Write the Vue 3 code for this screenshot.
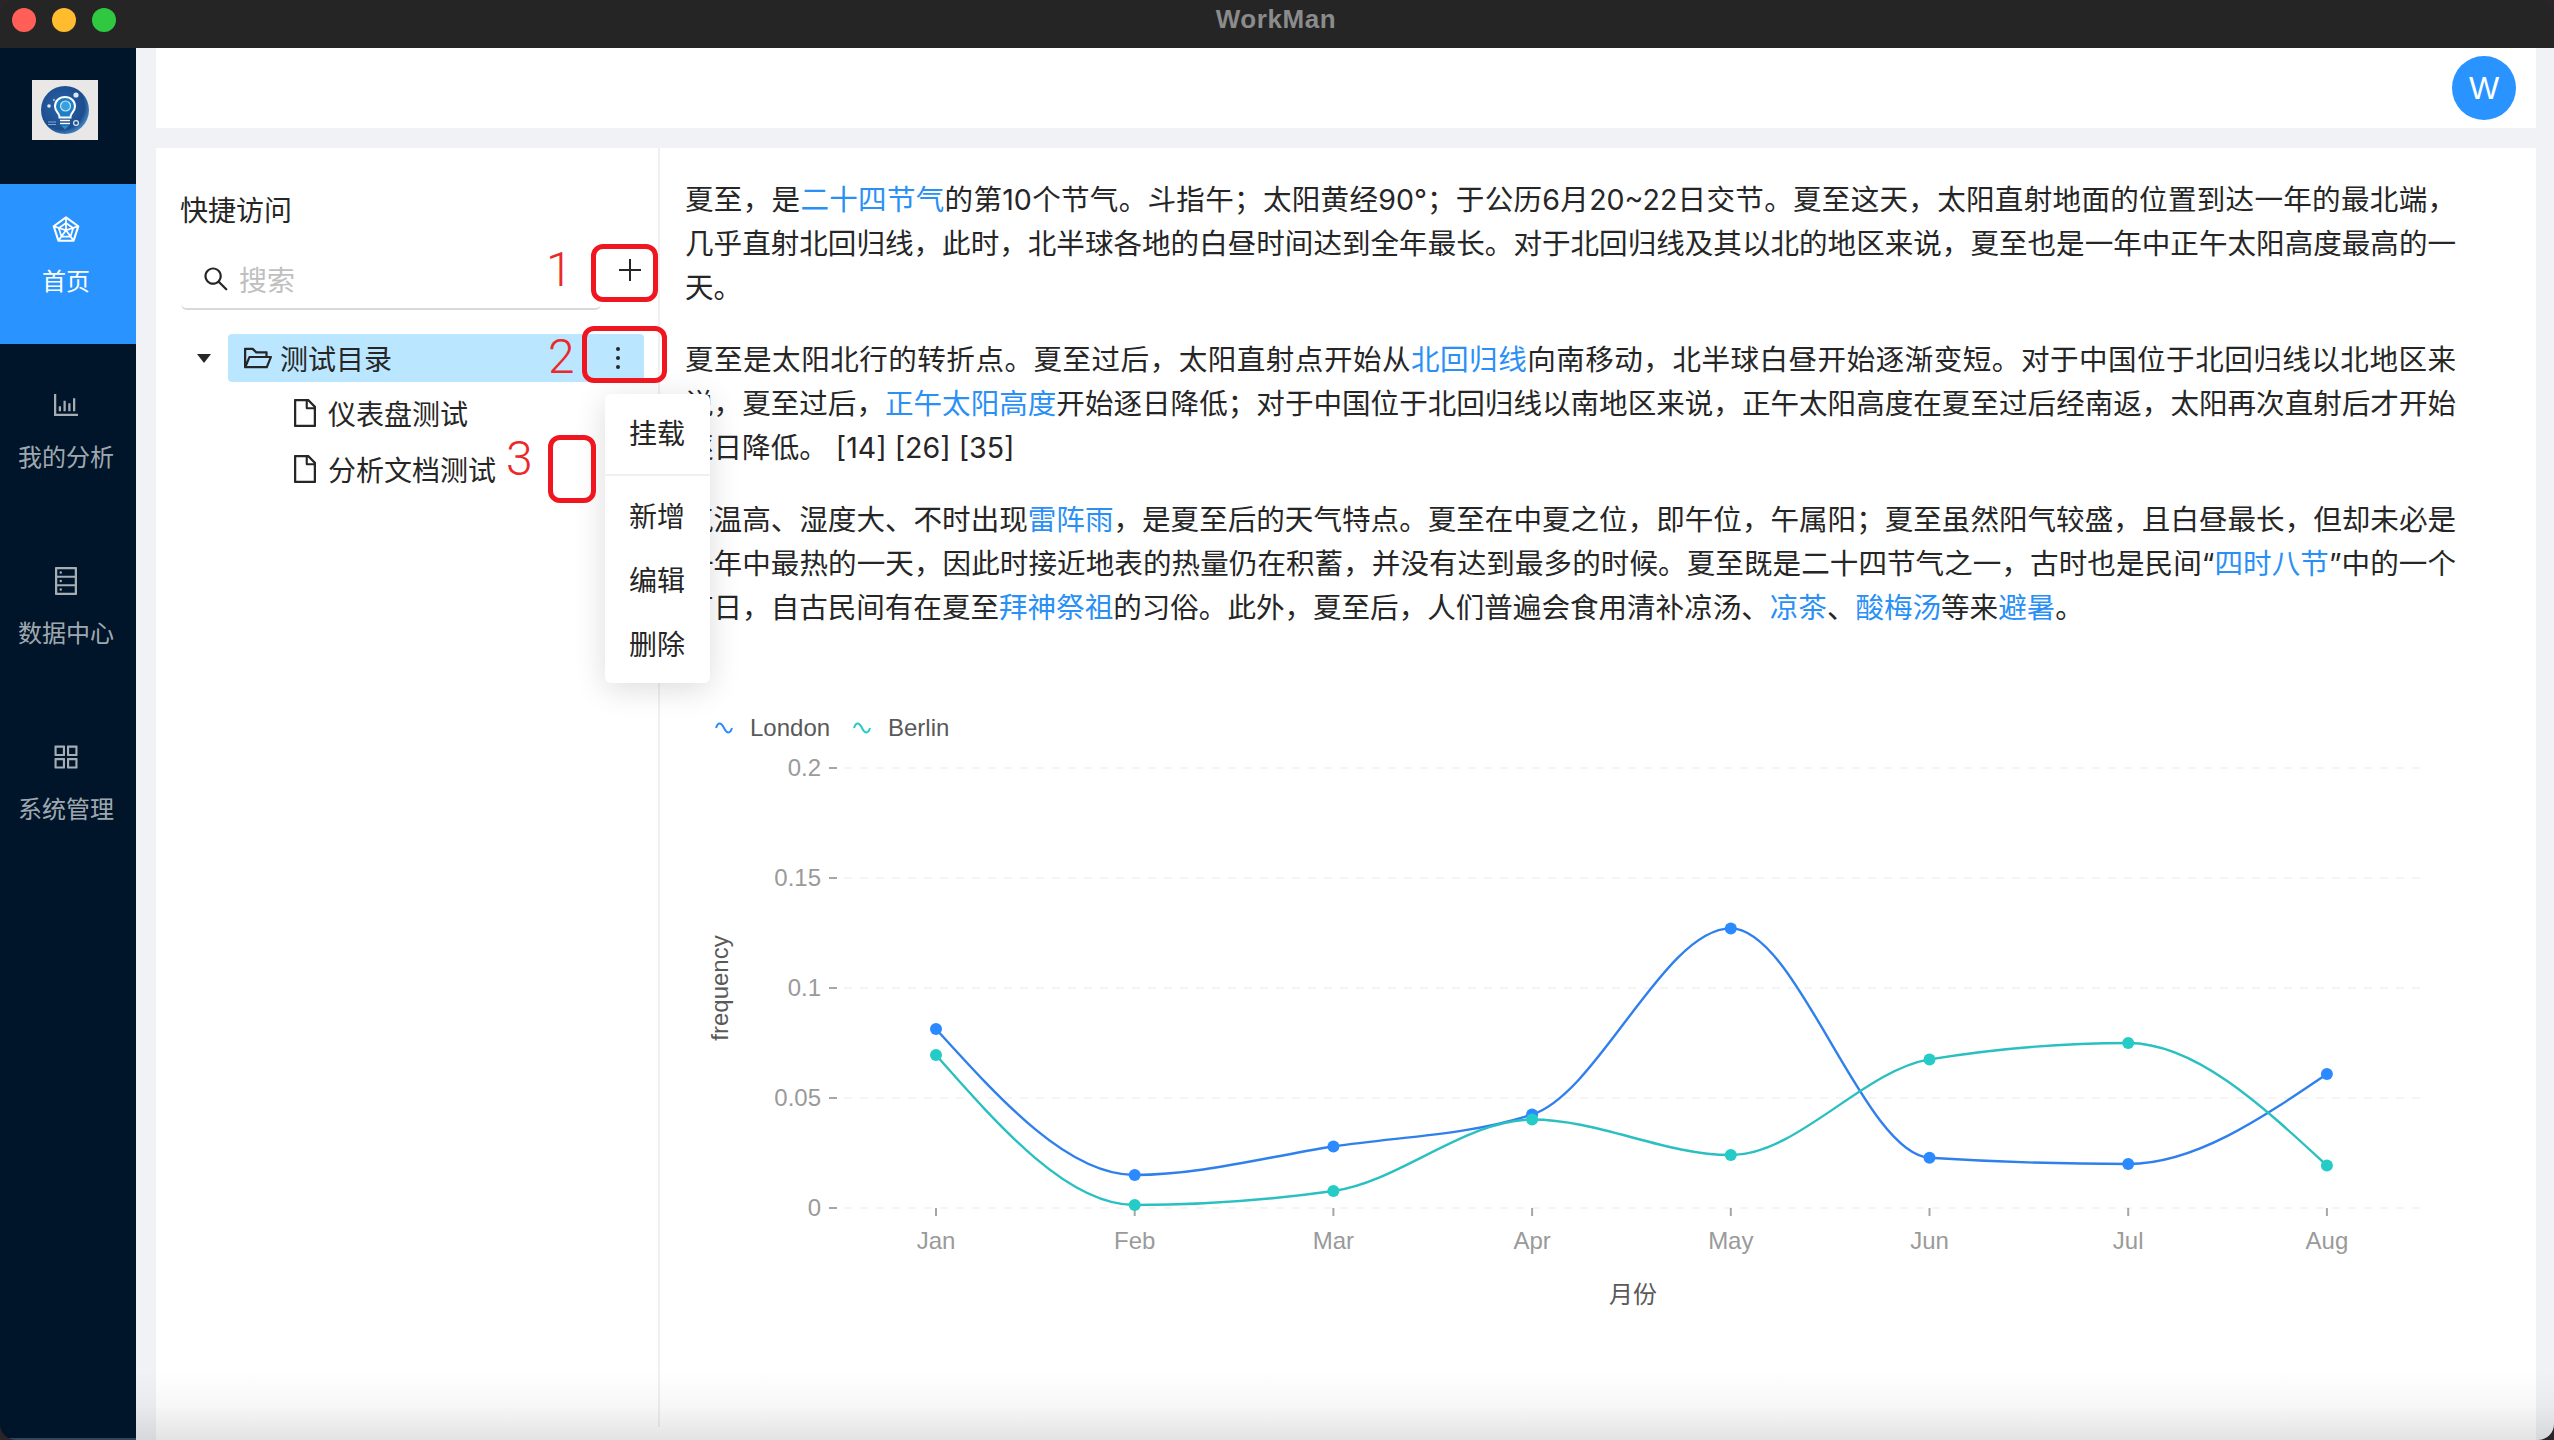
<template>
  <div class="window">
    <div class="titlebar">
      <div class="lights">
        <span class="light red"></span>
        <span class="light yellow"></span>
        <span class="light green"></span>
      </div>
      <span class="app-title">WorkMan</span>
    </div>

    <div class="body">
      <aside class="sidebar">
        <div class="logo-wrap">
          <svg class="logo" viewBox="0 0 66 60">
            <defs>
              <radialGradient id="logoBg" cx="42%" cy="42%" r="62%">
                <stop offset="0%" stop-color="#2a63a6" />
                <stop offset="78%" stop-color="#1c4d8e" />
                <stop offset="100%" stop-color="#4a8cc6" />
              </radialGradient>
            </defs>
            <rect width="66" height="60" fill="#e9e8e6" />
            <circle cx="33" cy="30" r="24" fill="url(#logoBg)" />
            <path d="M33 17c-6 0-10 4-10 9.500 0 3.500 2 5.500 3.500 7.500 1 1.500 1 2.500 1 3.500h11c0-1 0-2 1-3.500 1.500-2 3.500-4 3.500-7.500 0-5.500-4-9.500-10-9.500z" fill="#1f7fc4" stroke="#fff" stroke-width="2" />
            <circle cx="33.500" cy="26" r="5" fill="#3aa0dc" stroke="#bfe6fb" stroke-width="1.200" />
            <path d="M28 40.500h10M28 43.500h10" stroke="#fff" stroke-width="1.600" />
            <path d="M29 45.500h8l-4 4z" fill="#2a8fd6" />
            <circle cx="44" cy="15" r="2.600" fill="#dfe8f2" />
            <circle cx="17" cy="26" r="1.800" fill="#dfe8f2" />
            <circle cx="22" cy="20" r="1.200" fill="#8fb4d8" />
            <circle cx="44" cy="43" r="2.400" fill="none" stroke="#dfe8f2" stroke-width="1.200" />
            <path d="M16 42h8M16 44.500h8" stroke="#7fa6cf" stroke-width="1" />
          </svg>
        </div>
        <nav class="nav">
          <div
            v-for="item in navItems"
            :key="item.label"
            class="nav-item"
            :class="{ active: item.active }"
          >
            <svg class="nav-icon" viewBox="64 64 896 896" fill="currentColor">
              <path :d="item.icon" />
            </svg>
            <span class="nav-label">{{ item.label }}</span>
          </div>
        </nav>
      </aside>

      <main class="main">
        <header class="topbar">
          <div class="avatar">W</div>
        </header>

        <section class="content">
          <div class="content-inner">
            <div class="panel">
              <div class="panel-title">快捷访问</div>
              <div class="search-row">
                <div class="search">
                  <svg class="search-icon" viewBox="64 64 896 896" fill="currentColor">
                    <path d="M909.6 854.5L649.9 594.8C690.2 542.7 712 479 712 412c0-80.2-31.3-155.4-87.9-212.1-56.6-56.7-132-87.9-212.1-87.9s-155.5 31.3-212.1 87.9C143.2 256.5 112 331.8 112 412c0 80.1 31.3 155.500 87.9 212.1C256.5 680.8 331.8 712 412 712c67 0 130.6-21.8 182.7-62l259.7 259.6a8.2 8.2 0 0011.6 0l43.6-43.5a8.2 8.2 0 000-11.6zM570.4 570.4C528 612.7 471.8 636 412 636s-116-23.3-158.4-65.6C211.3 528 188 471.8 188 412s23.3-116.1 65.6-158.4C296 211.3 352.2 188 412 188s116.1 23.2 158.4 65.6S636 352.2 636 412s-23.3 116.1-65.6 158.4z" />
                  </svg>
                  <span class="placeholder">搜索</span>
                </div>
                <div class="add-btn">
                  <svg viewBox="0 0 22 22" width="22" height="22">
                    <path d="M11 0v22M0 11h22" stroke="#262626" stroke-width="2" />
                  </svg>
                </div>
              </div>

              <div class="tree">
                <div class="tree-root">
                  <svg class="caret" viewBox="0 0 14 9"><path d="M0 0h14L7 9z" fill="#262626" /></svg>
                  <div class="tree-row selected">
                    <svg class="folder" viewBox="64 64 896 896" fill="currentColor">
                      <path d="M928 444H820V330.4c0-17.7-14.3-32-32-32H473L355.7 186.2a8.15 8.15 0 00-5.5-2.2H96c-17.7 0-32 14.3-32 32v592c0 17.7 14.3 32 32 32h698c13 0 24.8-7.9 29.7-20l134-332c1.5-3.8 2.3-7.9 2.3-12 0-17.7-14.3-32-32-32zM136 256h188.5l119.6 114.4H748V444H238c-13 0-24.8 7.9-29.7 20L136 643.2V256zm635.3 512H159l103.3-256h612.4L771.3 768z" />
                    </svg>
                    <span>测试目录</span>
                    <div class="more">
                      <i></i><i></i><i></i>
                    </div>
                  </div>
                </div>
                <div v-for="doc in docs" :key="doc" class="tree-leaf">
                  <svg class="file" viewBox="64 64 896 896" fill="currentColor">
                    <path d="M854.6 288.6L639.4 73.4c-6-6-14.1-9.4-22.6-9.4H192c-17.7 0-32 14.3-32 32v832c0 17.7 14.3 32 32 32h640c17.7 0 32-14.3 32-32V311.3c0-8.5-3.4-16.7-9.4-22.7zM790.2 326H602V137.8L790.2 326zm1.8 562H232V136h302v216a42 42 0 0042 42h216v494z" />
                  </svg>
                  <span>{{ doc }}</span>
                </div>
              </div>

              <div class="menu">
                <div class="menu-item">挂载</div>
                <div class="menu-sep"></div>
                <div class="menu-item">新增</div>
                <div class="menu-item">编辑</div>
                <div class="menu-item">删除</div>
              </div>
            </div>

            <div class="article">
              <p>夏至，是<a>二十四节气</a>的第10个节气。斗指午；太阳黄经90°；于公历6月20~22日交节。夏至这天，太阳直射地面的位置到达一年的最北端，几乎直射北回归线，此时，北半球各地的白昼时间达到全年最长。对于北回归线及其以北的地区来说，夏至也是一年中正午太阳高度最高的一天。</p>
              <p>夏至是太阳北行的转折点。夏至过后，太阳直射点开始从<a>北回归线</a>向南移动，北半球白昼开始逐渐变短。对于中国位于北回归线以北地区来说，夏至过后，<a>正午太阳高度</a>开始逐日降低；对于中国位于北回归线以南地区来说，正午太阳高度在夏至过后经南返，太阳再次直射后才开始逐日降低。 [14] [26] [35]</p>
              <p>气温高、湿度大、不时出现<a>雷阵雨</a>，是夏至后的天气特点。夏至在中夏之位，即午位，午属阳；夏至虽然阳气较盛，且白昼最长，但却未必是一年中最热的一天，因此时接近地表的热量仍在积蓄，并没有达到最多的时候。夏至既是二十四节气之一，古时也是民间“<a>四时八节</a>”中的一个节日，自古民间有在夏至<a>拜神祭祖</a>的习俗。此外，夏至后，人们普遍会食用清补凉汤、<a>凉茶</a>、<a>酸梅汤</a>等来<a>避暑</a>。</p>

              <svg class="chart" viewBox="684 700 1780 620" width="1780" height="620">
                <!-- legend -->
                <path d="M716 728c2-6 5-6 8 0s6 6 8 0" fill="none" stroke="#2b8aff" stroke-width="2" />
                <text x="750" y="736" class="legend-text">London</text>
                <path d="M854 728c2-6 5-6 8 0s6 6 8 0" fill="none" stroke="#25cbc6" stroke-width="2" />
                <text x="888" y="736" class="legend-text">Berlin</text>

                <!-- y axis -->
                <g v-for="t in yTicks" :key="t.label">
                  <line x1="844" :x2="2427" :y1="t.y" :y2="t.y" class="grid" />
                  <line x1="829" x2="837" :y1="t.y" :y2="t.y" class="tick" />
                  <text x="821" :y="t.y + 8" text-anchor="end" class="axis-text">{{ t.label }}</text>
                </g>
                <text transform="translate(728 988) rotate(-90)" text-anchor="middle" class="axis-title">frequency</text>

                <!-- x axis -->
                <g v-for="(m, i) in months" :key="m">
                  <line :x1="xAt(i)" :x2="xAt(i)" y1="1208" y2="1216" class="tick" />
                  <text :x="xAt(i)" y="1249" text-anchor="middle" class="axis-text">{{ m }}</text>
                </g>
                <text x="1633" y="1303" text-anchor="middle" class="axis-title">月份</text>

                <!-- series -->
                <g v-for="s in series" :key="s.name">
                  <path :d="s.path" fill="none" :stroke="s.line" stroke-width="2.4" />
                  <circle
                    v-for="(y, i) in s.ys"
                    :key="i"
                    :cx="xAt(i)"
                    :cy="y"
                    r="6"
                    :fill="s.dot"
                  />
                </g>
              </svg>
            </div>
          </div>
        </section>

        <div class="bottom-fade"></div>
      </main>
    </div>

    <!-- red markers drawn over the screenshot -->
    <div class="mark box-1"></div>
    <div class="mark box-2"></div>
    <div class="mark box-3"></div>
    <span class="mark-no no-1">1</span>
    <span class="mark-no no-2">2</span>
    <span class="mark-no no-3">3</span>
  </div>
</template>

<script setup>
const navItems = [
  {
    label: '首页',
    active: true,
    icon: 'M926.8 397.1l-396-288a31.81 31.81 0 00-37.6 0l-396 288a31.99 31.99 0 00-11.6 35.8l151.3 466a32 32 0 0030.4 22.1h489.5c13.9 0 26.1-8.9 30.4-22.1l151.3-466c4.2-13.2-.5-27.6-11.7-35.8zM838.6 417l-98.5 32-200-144.7V199.9L838.6 417zM466 567.2l-89.1 122.3-55.2-169.2L466 567.2zm-116.3-96.8L484 373.3v140.8l-134.3-43.7zM512 599.2l93.9 128.9H418.1L512 599.2zm28.1-225.9l134.2 97.1L540.1 514V373.3zM558 567.2l144.3-46.9-55.2 169.2L558 567.2zm-74-367.3v104.4L283.9 449l-98.5-32L484 199.9zM169.3 470.8l86.5 28.1 80.4 246.4-53.8 73.9-113.1-348.4zM327.1 853l50.3-69h269.3l50.3 69H327.1zm414.5-33.8l-53.8-73.9 80.4-246.4 86.5-28.1-113.1 348.4z',
  },
  {
    label: '我的分析',
    icon: 'M888 792H200V168c0-4.4-3.6-8-8-8h-56c-4.4 0-8 3.6-8 8v688c0 4.4 3.6 8 8 8h752c4.4 0 8-3.6 8-8v-56c0-4.4-3.6-8-8-8zm-600-80h56c4.4 0 8-3.6 8-8V560c0-4.4-3.6-8-8-8h-56c-4.4 0-8 3.6-8 8v144c0 4.4 3.6 8 8 8zm152 0h56c4.4 0 8-3.6 8-8V384c0-4.4-3.6-8-8-8h-56c-4.4 0-8 3.6-8 8v320c0 4.4 3.6 8 8 8zm152 0h56c4.4 0 8-3.6 8-8V462c0-4.4-3.6-8-8-8h-56c-4.4 0-8 3.6-8 8v242c0 4.4 3.6 8 8 8zm152 0h56c4.4 0 8-3.6 8-8V304c0-4.4-3.6-8-8-8h-56c-4.4 0-8 3.6-8 8v400c0 4.4 3.6 8 8 8z',
  },
  {
    label: '数据中心',
    icon: 'M832 64H192c-17.7 0-32 14.3-32 32v832c0 17.7 14.3 32 32 32h640c17.7 0 32-14.3 32-32V96c0-17.7-14.3-32-32-32zm-600 72h560v208H232V136zm560 480H232V408h560v208zm0 272H232V680h560v208zM304 240a40 40 0 1080 0 40 40 0 10-80 0zm0 272a40 40 0 1080 0 40 40 0 10-80 0zm0 272a40 40 0 1080 0 40 40 0 10-80 0z',
  },
  {
    label: '系统管理',
    icon: 'M464 144H160c-8.8 0-16 7.2-16 16v304c0 8.8 7.2 16 16 16h304c8.8 0 16-7.2 16-16V160c0-8.8-7.2-16-16-16zm-52 268H212V212h200v200zm452-268H560c-8.8 0-16 7.2-16 16v304c0 8.8 7.2 16 16 16h304c8.8 0 16-7.2 16-16V160c0-8.8-7.2-16-16-16zm-52 268H612V212h200v200zM464 544H160c-8.8 0-16 7.2-16 16v304c0 8.8 7.2 16 16 16h304c8.8 0 16-7.2 16-16V560c0-8.8-7.2-16-16-16zm-52 268H212V612h200v200zm452-268H560c-8.8 0-16 7.2-16 16v304c0 8.8 7.2 16 16 16h304c8.8 0 16-7.2 16-16V560c0-8.8-7.2-16-16-16zm-52 268H612V612h200v200z',
  },
];

const docs = ['仪表盘测试', '分析文档测试'];

const months = ['Jan', 'Feb', 'Mar', 'Apr', 'May', 'Jun', 'Jul', 'Aug'];

const xAt = (i) => 936 + i * 198.7;

const yTicks = [
  { label: '0.2', y: 768 },
  { label: '0.15', y: 878 },
  { label: '0.1', y: 988 },
  { label: '0.05', y: 1098 },
  { label: '0', y: 1208 },
];

// same curve the chart lib uses for smooth lines (monotone x)
function sign(v) {
  return v < 0 ? -1 : 1;
}

function smoothPath(ys) {
  const h = 198.7;
  const n = ys.length;
  const t = new Array(n);
  for (let i = 1; i < n - 1; i++) {
    const s0 = (ys[i] - ys[i - 1]) / h;
    const s1 = (ys[i + 1] - ys[i]) / h;
    const p = (s0 + s1) / 2;
    t[i] = (sign(s0) + sign(s1)) * Math.min(Math.abs(s0), Math.abs(s1), 0.5 * Math.abs(p)) || 0;
  }
  t[0] = (3 * (ys[1] - ys[0]) / h - t[1]) / 2;
  t[n - 1] = (3 * (ys[n - 1] - ys[n - 2]) / h - t[n - 2]) / 2;

  const dx = h / 3;
  let d = `M${xAt(0)} ${ys[0]}`;
  for (let i = 0; i < n - 1; i++) {
    const x0 = xAt(i);
    const x1 = xAt(i + 1);
    d += `C${x0 + dx} ${ys[i] + dx * t[i]} ${x1 - dx} ${ys[i + 1] - dx * t[i + 1]} ${x1} ${ys[i + 1]}`;
  }
  return d;
}

const london = [1029, 1175, 1146.5, 1114.5, 928.4, 1157.7, 1164, 1074];
const berlin = [1055, 1205, 1191, 1119.5, 1155, 1059.4, 1043, 1165.5];

const series = [
  { name: 'London', ys: london, path: smoothPath(london), line: '#2f80ed', dot: '#2b8aff' },
  { name: 'Berlin', ys: berlin, path: smoothPath(berlin), line: '#2abfc0', dot: '#25cbc6' },
];
</script>

<style scoped>
.window {
  position: relative;
  width: 2554px;
  height: 1440px;
  overflow: hidden;
  border-radius: 16px;
  display: flex;
  flex-direction: column;
  font-family: "Liberation Sans", "Noto Sans CJK SC", sans-serif;
  color: #262626;
}

.titlebar {
  position: relative;
  height: 48px;
  flex-shrink: 0;
  background: #252525;
  display: flex;
  align-items: center;
  justify-content: center;
}

.lights {
  position: absolute;
  left: 12px;
  top: 8px;
  display: flex;
  gap: 16px;
}

.light {
  width: 24px;
  height: 24px;
  border-radius: 50%;
}

.red { background: #ff5f57; }
.yellow { background: #febc2e; }
.green { background: #2fc840; }

.app-title {
  font-size: 26px;
  font-weight: 700;
  color: #8b8b8b;
  letter-spacing: 0.6px;
  margin: -9px 2px 0 0;
}

.body {
  flex: 1;
  display: flex;
  min-height: 0;
}

.sidebar {
  width: 136px;
  flex-shrink: 0;
  background: #001529;
  box-shadow: inset 0 -2px 0 #33465a;
}

.logo-wrap {
  height: 136px;
  padding: 32px 0 0 32px;
  box-sizing: border-box;
}

.logo {
  display: block;
  width: 66px;
  height: 60px;
}

.nav {
  display: flex;
  flex-direction: column;
  gap: 16px;
}

.nav-item {
  height: 160px;
  box-sizing: border-box;
  padding: 31px 4px 0 0;
  display: flex;
  flex-direction: column;
  align-items: center;
  color: rgba(255, 255, 255, 0.65);
}

.nav-item.active {
  background: #2993ff;
  color: #fff;
}

.nav-icon {
  width: 28px;
  height: 28px;
}

.nav-label {
  margin-top: 25px;
  font-size: 24px;
  line-height: 28px;
}

.main {
  position: relative;
  flex: 1;
  min-width: 0;
  display: flex;
  flex-direction: column;
  padding: 0 18px 0 20px;
  background: #f0f2f5;
}

.topbar {
  height: 80px;
  flex-shrink: 0;
  background: #fff;
  display: flex;
  align-items: center;
  justify-content: flex-end;
  padding-right: 20px;
}

.avatar {
  width: 64px;
  height: 64px;
  border-radius: 50%;
  background: #2993ff;
  color: #fff;
  font-size: 32px;
  line-height: 64px;
  text-align: center;
}

.content {
  flex: 1;
  min-height: 0;
  margin-top: 20px;
  background: #fff;
  padding-bottom: 13px;
}

.content-inner {
  height: 100%;
  display: flex;
}

.panel {
  position: relative;
  width: 504px;
  flex-shrink: 0;
  box-sizing: border-box;
  padding: 42px 0 0 24px;
  border-right: 2px solid #f0f0f0;
}

.panel-title {
  font-size: 28px;
  line-height: 44px;
}

.search-row {
  display: flex;
  margin: 16px 0 0 1px;
}

.search {
  width: 420px;
  height: 60px;
  box-sizing: border-box;
  border-bottom: 2px solid #d9d9d9;
  border-radius: 6px;
  display: flex;
  align-items: center;
  padding-left: 22px;
}

.search-icon {
  width: 26px;
  height: 26px;
  color: #262626;
}

.placeholder {
  margin-left: 10px;
  font-size: 28px;
  color: #bfbfbf;
}

.add-btn {
  width: 22px;
  height: 22px;
  margin: 9px 0 0 18px;
}

.add-btn svg {
  display: block;
}

.tree {
  margin: 24px 0 0 1px;
  font-size: 28px;
}

.tree-root {
  display: flex;
  align-items: center;
}

.caret {
  width: 14px;
  height: 9px;
  margin-left: 16px;
  margin-right: 17px;
}

.tree-row {
  width: 416px;
  height: 48px;
  border-radius: 4px;
  display: flex;
  align-items: center;
  padding-left: 16px;
  box-sizing: border-box;
}

.tree-row.selected {
  background: #bae7ff;
}

.folder {
  width: 28px;
  height: 28px;
  margin-right: 8px;
}

.more {
  margin-left: auto;
  width: 52px;
  height: 48px;
  display: flex;
  flex-direction: column;
  align-items: center;
  justify-content: center;
  gap: 5px;
}

.more i {
  width: 4px;
  height: 4px;
  border-radius: 50%;
  background: #262626;
}

.tree-leaf {
  display: flex;
  align-items: center;
  height: 48px;
  margin-top: 8px;
  padding-left: 110px;
  position: relative;
  top: -1px;
}

.file {
  width: 28px;
  height: 28px;
  margin-right: 9px;
}

.menu {
  position: absolute;
  left: 449px;
  top: 246px;
  z-index: 10;
  width: 105px;
  height: 289px;
  box-sizing: border-box;
  padding-top: 9px;
  background: #fff;
  border-radius: 6px;
  box-shadow: 0 6px 32px rgba(0, 0, 0, 0.14);
}

.menu-item {
  height: 64px;
  line-height: 64px;
  padding-left: 24px;
  font-size: 28px;
}

.menu-sep {
  height: 2px;
  margin: 7px 0 10px;
  background: #f0f0f0;
}

.article {
  flex: 1;
  min-width: 0;
  padding: 30px 80px 0 25px;
  font-family: Inter, "Noto Sans CJK SC", sans-serif;
  font-size: 28.56px;
  line-height: 44px;
  text-align: justify;
}

.article p {
  margin: 0 0 28px;
}

.article a {
  color: #2a90f5;
}

.chart {
  display: block;
  margin: 70px 0 0 -1px;
  overflow: visible;
  font-family: "Liberation Sans", "Noto Sans CJK SC", sans-serif;
}

.legend-text {
  font-size: 24px;
  fill: #595959;
}

.axis-text {
  font-size: 24px;
  fill: #9a9a9a;
}

.axis-title {
  font-size: 24px;
  fill: #595959;
}

.grid {
  stroke: #f4f4f4;
  stroke-width: 2;
  stroke-dasharray: 8 8;
}

.tick {
  stroke: #a6a6a6;
  stroke-width: 2;
}

.bottom-fade {
  position: absolute;
  left: 0;
  right: 0;
  bottom: 0;
  height: 70px;
  pointer-events: none;
  background: linear-gradient(rgba(0, 0, 0, 0), rgba(0, 0, 0, 0.03) 50%, rgba(0, 0, 0, 0.11));
}

.mark {
  position: absolute;
  box-sizing: border-box;
  border: 5px solid #ef1620;
  border-radius: 12px;
  z-index: 20;
}

.box-1 { left: 591px; top: 244px; width: 67px; height: 58px; }
.box-2 { left: 582px; top: 326px; width: 85px; height: 57px; }
.box-3 { left: 548px; top: 435px; width: 48px; height: 68px; }

.mark-no {
  position: absolute;
  z-index: 20;
  font-family: Roboto, "Liberation Sans", sans-serif;
  font-weight: 300;
  font-size: 48px;
  line-height: 48px;
  color: #ea2a2a;
}

.no-1 { left: 546px; top: 246px; }
.no-2 { left: 548px; top: 333px; }
.no-3 { left: 506px; top: 435px; }
</style>

<style>
body {
  background: #2a2528;
}
</style>
